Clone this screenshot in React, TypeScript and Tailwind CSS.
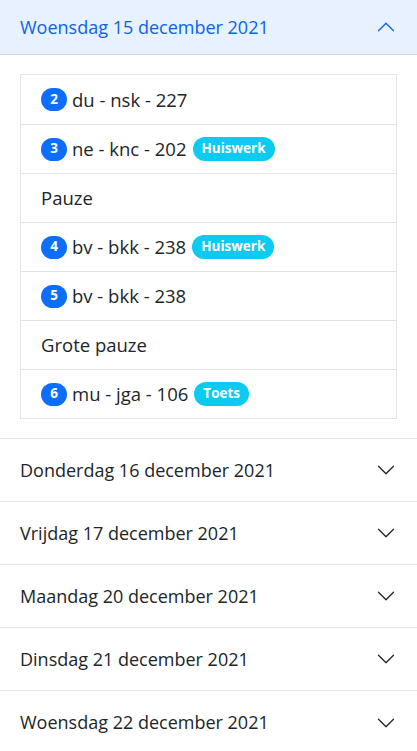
import React from "react";

const Chevron = ({ up, color }: { up?: boolean; color: string }) => (
  <svg
    width="20"
    height="20"
    viewBox="0 0 16 16"
    fill={color}
    className={up ? "rotate-180 shrink-0" : "shrink-0"}
  >
    <path
      fillRule="evenodd"
      d="M1.646 4.646a.5.5 0 0 1 .708 0L8 10.293l5.646-5.647a.5.5 0 0 1 .708.708l-6 6a.5.5 0 0 1-.708 0l-6-6a.5.5 0 0 1 0-.708z"
    />
  </svg>
);

type Row = { n?: number; text: string; tag?: string };

const rows: Row[] = [
  { n: 2, text: "du - nsk - 227" },
  { n: 3, text: "ne - knc - 202", tag: "Huiswerk" },
  { text: "Pauze" },
  { n: 4, text: "bv - bkk - 238", tag: "Huiswerk" },
  { n: 5, text: "bv - bkk - 238" },
  { text: "Grote pauze" },
  { n: 6, text: "mu - jga - 106", tag: "Toets" },
];

const days = [
  "Donderdag 16 december 2021",
  "Vrijdag 17 december 2021",
  "Maandag 20 december 2021",
  "Dinsdag 21 december 2021",
  "Woensdag 22 december 2021",
];

export default function App() {
  return (
    <div
      className="w-[417px] min-h-[751px] bg-white text-[#212529]"
      style={{ fontFamily: '"Open Sans", "Noto Sans", sans-serif' }}
    >
      <div className="h-[55px] bg-[#e7f1ff] border-b border-[#cfd8e4] flex items-center justify-between pl-[20px] pr-[21px]">
        <span className="text-[18px] text-[#0c63e4]">Woensdag 15 december 2021</span>
        <Chevron up color="#0c63e4" />
      </div>
      <div className="px-[20px] pt-[19px] pb-[19px] border-b border-[#e6e6e6]">
        <ul className="border border-[#e3e3e3]">
          {rows.map((r, i) => (
            <li
              key={i}
              className={
                "h-[49px] flex items-center pl-[20px] text-[18.5px] " +
                (i > 0 ? "border-t border-[#e3e3e3]" : "")
              }
            >
              {r.n !== undefined && (
                <span className="w-[26px] h-[23px] rounded-full bg-[#0d6efd] text-white text-[13.5px] font-bold flex items-center justify-center mr-[5px] leading-none">
                  {r.n}
                </span>
              )}
              <span>{r.text}</span>
              {r.tag && (
                <span className="ml-[6px] h-[24px] px-[9px] rounded-full bg-[#0dcaf0] text-white text-[13.5px] font-bold flex items-center leading-none">
                  {r.tag}
                </span>
              )}
            </li>
          ))}
        </ul>
      </div>
      {days.map((d, i) => (
        <div
          key={d}
          className={
            "h-[63px] flex items-center justify-between pl-[20px] pr-[21px] " +
            (i < days.length - 1 ? "border-b border-[#e6e6e6]" : "")
          }
        >
          <span className="text-[18px]">{d}</span>
          <Chevron color="#212529" />
        </div>
      ))}
    </div>
  );
}
